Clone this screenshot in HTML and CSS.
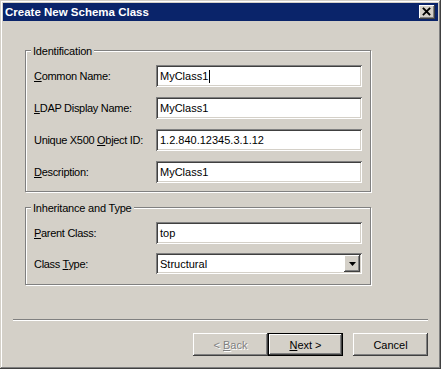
FILE: index.html
```html
<!DOCTYPE html>
<html lang="en">
<head>
  <meta charset="UTF-8">
  <title>Create New Schema Class</title>
  <link rel="stylesheet" href="styles.css">
</head>
<body>

<div class="window">
  <div class="titlebar">
    <span class="title">Create New Schema Class</span>
    <span class="close-btn">
      <svg width="16" height="14" viewBox="0 0 16 14">
        <path d="M4.5 3.5 L10.5 9.5 M10.5 3.5 L4.5 9.5" stroke="#000" stroke-width="1.8" stroke-linecap="square"/>
      </svg>
    </span>
  </div>

  <div class="content">
    <div class="group">
      <div class="legend">Identification</div>
      <div class="rows">
        <span class="lbl"><u>C</u>ommon Name:</span>
        <div class="edit">MyClass1<span class="caret"></span></div>

        <span class="lbl"><u>L</u>DAP Display Name:</span>
        <div class="edit">MyClass1</div>

        <span class="lbl">Unique X500 <u>O</u>bject ID:</span>
        <div class="edit">1.2.840.12345.3.1.12</div>

        <span class="lbl"><u>D</u>escription:</span>
        <div class="edit">MyClass1</div>
      </div>
    </div>

    <div class="group group-type">
      <div class="legend">Inheritance and Type</div>
      <div class="rows rows-type">
        <span class="lbl"><u>P</u>arent Class:</span>
        <div class="edit">top</div>

        <span class="lbl">Class <u>T</u>ype:</span>
        <div class="edit combo">
          <span>Structural</span>
          <span class="drop">
            <svg width="7" height="4" viewBox="0 0 7 4"><polygon points="0,0 7,0 3.5,4" fill="#000"/></svg>
          </span>
        </div>
      </div>
    </div>

    <div class="separator"></div>

    <div class="buttons">
      <button class="btn disabled">&lt; <u>B</u>ack</button>
      <button class="btn default"><u>N</u>ext &gt;</button>
      <button class="btn cancel">Cancel</button>
    </div>
  </div>
</div>

</body>
</html>
```

FILE: styles.css
```css
* {
  box-sizing: border-box;
  margin: 0;
  padding: 0;
}

body {
  font-family: 'Liberation Sans', Arial, sans-serif;
  font-size: 11px;
  color: #000;
  background: #d4d0c8;
}

.window {
  width: 441px;
  height: 369px;
  padding: 3px;
  background: #d4d0c8;
  box-shadow:
    inset -1px -1px 0 #404040,
    inset 1px 1px 0 #d4d0c8,
    inset -2px -2px 0 #808080,
    inset 2px 2px 0 #fff;
}

.titlebar {
  height: 18px;
  background: #0a246a;
  display: flex;
  align-items: center;
  justify-content: space-between;
  padding: 0 3px 0 2px;
}

.title {
  color: #fff;
  font-weight: bold;
  font-size: 11.5px;
}

.close-btn {
  width: 16px;
  height: 14px;
  display: flex;
  background: #d4d0c8;
  box-shadow:
    inset -1px -1px 0 #404040,
    inset 1px 1px 0 #fff,
    inset -2px -2px 0 #808080;
}

.content {
  padding: 29px 10px 0;
}

.group {
  width: 346px;
  margin-left: 12px;
  border: 1px solid #808080;
  box-shadow: 1px 1px 0 #fff, inset 1px 1px 0 #fff;
  padding: 0 8px 8px;
}

.group-type {
  margin-top: 15px;
  padding-bottom: 10px;
}

.legend {
  width: fit-content;
  height: 14px;
  line-height: 14px;
  margin: -7px 0 0 -3px;
  padding: 0 2px;
  background: #d4d0c8;
  letter-spacing: -0.2px;
}

.rows {
  display: grid;
  grid-template-columns: 122px 206px;
  grid-auto-rows: 22px;
  row-gap: 10px;
  align-items: center;
  margin-top: 7px;
}

.rows-type {
  grid-auto-rows: 22px 21px;
  row-gap: 9px;
}

.lbl {
  white-space: nowrap;
  letter-spacing: -0.3px;
}

.edit {
  height: 100%;
  background: #fff;
  padding: 0 2px 0 4px;
  display: flex;
  align-items: center;
  white-space: nowrap;
  box-shadow:
    inset 1px 1px 0 #808080,
    inset -1px -1px 0 #fff,
    inset 2px 2px 0 #404040,
    inset -2px -2px 0 #d4d0c8;
}

.caret {
  display: inline-block;
  width: 1px;
  height: 13px;
  background: #000;
  margin-left: 1px;
}

.combo {
  justify-content: space-between;
}

.drop {
  width: 16px;
  height: 17px;
  display: flex;
  align-items: center;
  justify-content: center;
  background: #d4d0c8;
  box-shadow:
    inset -1px -1px 0 #404040,
    inset 1px 1px 0 #fff,
    inset -2px -2px 0 #808080;
}

.separator {
  margin-top: 34px;
  border-top: 1px solid #808080;
  border-bottom: 1px solid #fff;
}

.buttons {
  display: flex;
  justify-content: flex-end;
  margin-top: 12px;
}

.btn {
  width: 75px;
  height: 23px;
  font: inherit;
  color: #000;
  border: none;
  background: #d4d0c8;
  box-shadow:
    inset -1px -1px 0 #404040,
    inset 1px 1px 0 #fff,
    inset -2px -2px 0 #808080;
}

.btn.disabled {
  color: #808080;
  text-shadow: 1px 1px 0 #fff;
}

.btn.default {
  border: 1px solid #000;
}

.btn.cancel {
  margin-left: 10px;
}
```
